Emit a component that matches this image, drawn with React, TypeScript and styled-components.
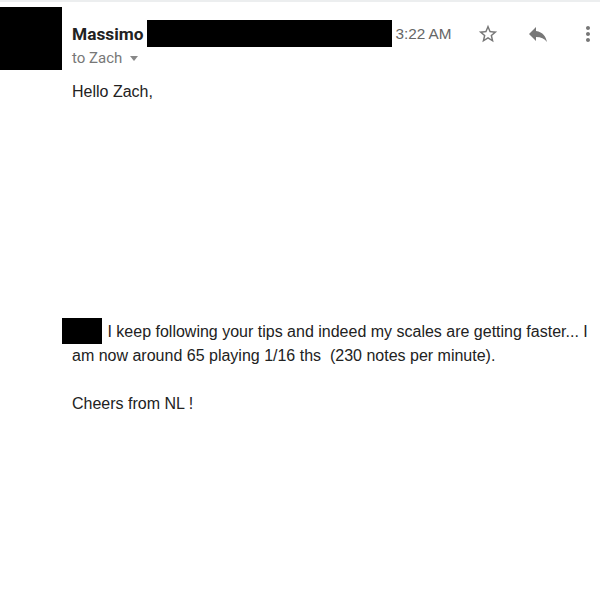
import React from "react";
import styled, { createGlobalStyle } from "styled-components";

const Global = createGlobalStyle`
  html, body { margin: 0; padding: 0; background: #fff; }
  body { font-family: "Liberation Sans", Arial, sans-serif; }
`;

const Page = styled.div`
  width: 600px;
  min-height: 600px;
  border-top: 2px solid #eceeef;
  box-sizing: border-box;
  background: #fff;
`;

const Header = styled.div`
  display: flex;
  align-items: flex-start;
  padding-top: 5px;
`;

const Avatar = styled.div`
  width: 62px;
  height: 63px;
  background: #000;
  flex: none;
`;

const Info = styled.div`
  flex: 1;
  margin-left: 10px;
  padding-top: 13px;
  display: flex;
  flex-direction: column;
`;

const TopRow = styled.div`
  display: flex;
  align-items: center;
  height: 27px;
`;

const Name = styled.span`
  font-family: Roboto, "Liberation Sans", Arial, sans-serif;
  font-weight: 700;
  font-size: 17.3px;
  color: #222;
`;

const Redact = styled.span<{ $w: number; $h: number }>`
  display: inline-block;
  width: ${(p) => p.$w}px;
  height: ${(p) => p.$h}px;
  background: #000;
  flex: none;
`;

const NameRedact = styled(Redact)`
  margin-left: 4px;
`;

const Time = styled.span`
  font-family: "Liberation Sans", Arial, sans-serif;
  font-size: 15.3px;
  color: #666;
  margin-left: 3px;
`;

const Icons = styled.div`
  display: flex;
  align-items: center;
  margin-left: auto;
  gap: 26px;
`;

const IconBtn = styled.span`
  width: 24px;
  height: 24px;
  display: flex;
  align-items: center;
  justify-content: center;
  color: #777;
`;

const ToRow = styled.div`
  display: flex;
  align-items: center;
  margin-top: -1px;
  font-family: Roboto, "Liberation Sans", Arial, sans-serif;
  font-size: 15px;
  color: #777;
  height: 24px;
`;

const Caret = styled.span`
  margin-left: 8px;
  width: 0;
  height: 0;
  border-left: 4.5px solid transparent;
  border-right: 4.5px solid transparent;
  border-top: 5px solid #888;
`;

const Body = styled.div`
  padding-left: 72px;
  padding-right: 8px;
  margin-top: 10px;
  font-family: "Liberation Sans", Arial, sans-serif;
  font-size: 16px;
  line-height: 24px;
  color: #222;
`;

const Para = styled.p<{ $top?: number }>`
  margin: 0;
  margin-top: ${(p) => p.$top ?? 0}px;
`;

const InlineRedact = styled(Redact)`
  margin-left: -10px;
  margin-right: 1px;
  vertical-align: -7px;
`;

const Star = () => (
  <svg width="22" height="22" viewBox="0 0 24 24" fill="#777">
    <path d="M22 9.24l-7.19-.62L12 2 9.19 8.63 2 9.24l5.46 4.73L5.82 21 12 17.27 18.18 21l-1.63-7.03L22 9.24zM12 15.4l-3.76 2.27 1-4.28-3.32-2.88 4.38-.38L12 6.1l1.71 4.04 4.38.38-3.32 2.88 1 4.28L12 15.4z" />
  </svg>
);

const Reply = () => (
  <svg width="24" height="24" viewBox="0 0 24 24" fill="#777">
    <path d="M10 9V5l-7 7 7 7v-4.1c5 0 8.5 1.6 11 5.1-1-5-4-10-11-11z" />
  </svg>
);

const More = () => (
  <svg width="24" height="24" viewBox="0 0 24 24" fill="#777">
    <path d="M12 8c1.1 0 2-.9 2-2s-.9-2-2-2-2 .9-2 2 .9 2 2 2zm0 2c-1.1 0-2 .9-2 2s.9 2 2 2 2-.9 2-2-.9-2-2-2zm0 6c-1.1 0-2 .9-2 2s.9 2 2 2 2-.9 2-2-.9-2-2-2z" />
  </svg>
);

export default function App() {
  return (
    <Page>
      <Global />
      <Header>
        <Avatar />
        <Info>
          <TopRow>
            <Name>Massimo</Name>
            <NameRedact $w={245} $h={27} />
            <Time>3:22 AM</Time>
            <Icons>
              <IconBtn><Star /></IconBtn>
              <IconBtn><Reply /></IconBtn>
              <IconBtn><More /></IconBtn>
            </Icons>
          </TopRow>
          <ToRow>
            to Zach
            <Caret />
          </ToRow>
        </Info>
      </Header>
      <Body>
        <Para>Hello Zach,</Para>
        <Para $top={214}>
          <InlineRedact $w={40} $h={26} /> I keep following your tips and indeed my scales are getting faster... I am now around 65 playing 1/16 ths&nbsp; (230 notes per minute).
        </Para>
        <Para $top={24}>Cheers from NL !</Para>
      </Body>
    </Page>
  );
}
